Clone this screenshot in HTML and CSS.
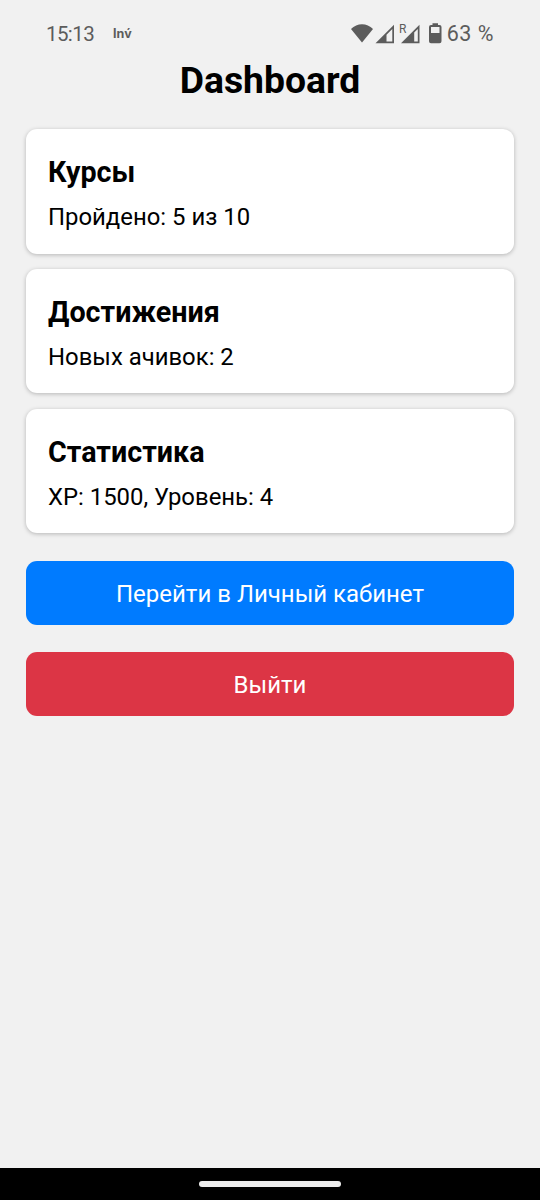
FILE: index.html
```
<!DOCTYPE html>
<html lang="ru">
<head>
    <meta charset="UTF-8">
    <meta name="viewport" content="width=device-width, initial-scale=1.0">
    <title>Dashboard</title>
    <link rel="stylesheet" href="styles.css">
</head>
<body>
    <header class="status-bar">
        <span class="time">15:13</span>
        <span class="app-label">Inv́</span>
        <div class="status-icons">
            <svg class="signals" width="91" height="24" viewBox="0 0 91 24" fill="#5c5c5c">
                <!-- Wi-Fi -->
                <path d="M0 7C6 0.6 16 0.6 22 7L11 20.5Z"/>
                <!-- SIM 1 -->
                <path fill-rule="evenodd" d="M24.5 21.2L43 2.7V21.2ZM35.5 19.5H41.3V7L35.5 12.8Z"/>
                <!-- SIM 2 -->
                <path fill-rule="evenodd" d="M50 21.2L68.5 2.7V21.2ZM63.2 19.5H66.8V7L63.2 10.6Z"/>
                <text class="roaming" x="48" y="11">R</text>
                <!-- Battery -->
                <path fill-rule="evenodd" d="M81.5 1.2H87V3H88.5Q90.5 3 90.5 5V19.2Q90.5 21.2 88.5 21.2H80Q78 21.2 78 19.2V5Q78 3 80 3H81.5ZM80 5V11H88.5V5Z"/>
            </svg>
            <span class="percent">63 %</span>
        </div>
    </header>

    <main class="container">
        <h1 class="title">Dashboard</h1>
        <div class="card">
            <h2>Курсы</h2>
            <p>Пройдено: 5 из 10</p>
        </div>
        <div class="card">
            <h2>Достижения</h2>
            <p>Новых ачивок: 2</p>
        </div>
        <div class="card">
            <h2>Статистика</h2>
            <p>XP: 1500, Уровень: 4</p>
        </div>
        <button class="button">Перейти в Личный кабинет</button>
        <button class="button logout">Выйти</button>
    </main>

    <footer class="nav-bar">
        <div class="nav-handle"></div>
    </footer>
</body>
</html>
```
FILE: styles.css
```
* {
    box-sizing: border-box;
}
body {
    display: flex;
    flex-direction: column;
    height: 1200px;
    margin: 0;
    background-color: #f1f1f1;
    color: #000;
    font-family: Roboto, sans-serif;
}
.status-bar {
    display: flex;
    align-items: center;
    height: 59px;
    padding: 8px 46px 0 46px;
    color: #5c5c5c;
}
.time {
    font-size: 20.5px;
    letter-spacing: -0.6px;
}
.app-label {
    margin-left: 19px;
    font-family: Inter, sans-serif;
    font-size: 12.5px;
    font-weight: bold;
}
.status-icons {
    display: flex;
    align-items: center;
    margin-left: auto;
}
.roaming {
    font-size: 12px;
}
.percent {
    margin-left: 5px;
    font-size: 21.5px;
    letter-spacing: 0.5px;
}
.container {
    flex: 1;
    padding: 0 26px;
}
.title {
    margin: 0 0 28px;
    font-size: 37.3px;
    line-height: 42px;
    text-align: center;
}
.card {
    height: 124.5px;
    margin-bottom: 15.3px;
    padding: 21px 22px;
    background-color: #fff;
    border-radius: 11px;
    box-shadow: 0 1px 4px rgba(0, 0, 0, 0.25);
}
.card h2 {
    margin: 4px 0 11px;
    font-size: 28.7px;
    line-height: 36px;
}
.card p {
    margin: 0;
    font-size: 23.9px;
    line-height: 32px;
}
.button {
    display: block;
    width: 100%;
    height: 64px;
    margin-top: 28px;
    padding: 2px 0 0;
    border: none;
    border-radius: 11px;
    background-color: #007bff;
    color: #fff;
    font-family: inherit;
    font-size: 24px;
    cursor: pointer;
}
.logout {
    margin-top: 27px;
    background-color: #dc3545;
}
.nav-bar {
    display: flex;
    justify-content: center;
    height: 32px;
    padding-top: 13px;
    background-color: #000;
}
.nav-handle {
    width: 142px;
    height: 6px;
    border-radius: 3px;
    background-color: #ececec;
}
```
